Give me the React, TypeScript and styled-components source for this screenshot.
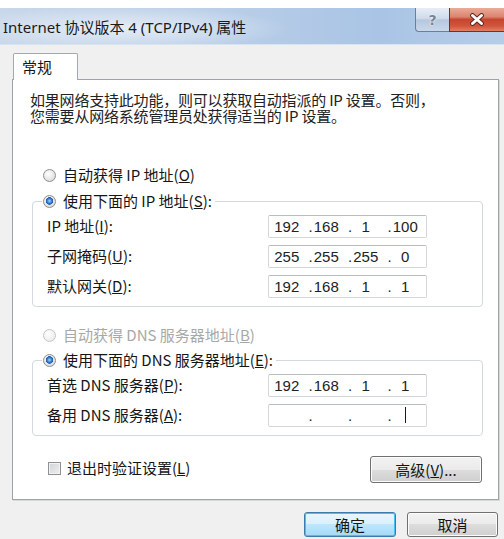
import React from 'react'
import styled, { createGlobalStyle } from 'styled-components'

const GlobalStyle = createGlobalStyle`
  html, body {
    margin: 0;
    padding: 0;
    background: #ffffff;
    overflow: hidden;
  }
  #root {
    width: 504px;
    height: 539px;
  }
`

const cjk = `"Noto Sans CJK SC", "Noto Sans", sans-serif`

const Window = styled.div`
  margin-top: 8px;
  width: 504px;
  height: 531px;
  display: flex;
  flex-direction: column;
  background: #f0f0f0;
  font-family: ${cjk};
  color: #151515;
`

const TitleBar = styled.div`
  height: 37px;
  flex: 0 0 auto;
  display: flex;
  align-items: flex-start;
  background:
    radial-gradient(ellipse 170px 22px at 120px 55%, rgba(236, 242, 249, 0.85), rgba(236, 242, 249, 0) 100%),
    linear-gradient(to right, #c8d7ea 0%, #bcd0e8 40%, #a9c4e5 75%, #b6cde8 100%);
  box-shadow: inset 0 -1px 0 #d9e4f1;
`

const Title = styled.div`
  flex: 1;
  align-self: center;
  padding-left: 3px;
  font-family: "Noto Sans", "Noto Sans CJK SC", sans-serif;
  font-size: 15px;
  line-height: 20px;
  color: #1a1a1a;
  white-space: nowrap;
`

const CaptionButtons = styled.div`
  display: flex;
`

const HelpButton = styled.div`
  width: 34px;
  height: 24px;
  box-sizing: border-box;
  border: 1px solid #6b7f99;
  border-top: none;
  border-right: none;
  border-radius: 0 0 0 4px;
  background: linear-gradient(#e6edf6 0%, #cfdbeb 45%, #b6c7de 52%, #c9d7ea 100%);
  display: flex;
  align-items: center;
  justify-content: center;
  font-family: "DejaVu Sans", sans-serif;
  font-weight: bold;
  font-size: 14px;
  color: #75839a;
  text-shadow: 0 0 2px #ffffff, 0 0 1px #ffffff;
`

const CloseButton = styled.div`
  width: 55px;
  height: 24px;
  box-sizing: border-box;
  border: 1px solid #7a2d22;
  border-top: none;
  border-right: none;
  background: linear-gradient(#e9ab99 0%, #dc8570 38%, #c84530 50%, #d0553c 78%, #e47e62 100%);
  display: flex;
  align-items: center;
  justify-content: center;
`

const Body = styled.div`
  flex: 1;
  display: flex;
  flex-direction: column;
  padding: 8px 5px 0 12px;
`

const TabStrip = styled.div`
  display: flex;
  padding-left: 1px;
`

const Tab = styled.div`
  position: relative;
  z-index: 1;
  width: 65px;
  height: 27px;
  box-sizing: border-box;
  margin-bottom: -1px;
  border: 1px solid #a3a9b1;
  border-bottom: none;
  border-radius: 2px 2px 0 0;
  background: #ffffff;
  padding: 3px 0 0 8px;
  font-size: 15px;
  line-height: 20px;
`

const Panel = styled.div`
  border: 1px solid #9da3ab;
  box-shadow: 1px 1px 0 #d8d8d8;
  background: #ffffff;
  padding: 12px 16px 16px 17px;
  display: flex;
  flex-direction: column;
  align-items: flex-start;
`

const Description = styled.p`
  margin: 0;
  font-size: 15px;
  line-height: 16px;
  color: #222222;
  letter-spacing: -0.2px;
`

const OptionRow = styled.div<{ $top: number; $disabled?: boolean }>`
  display: flex;
  align-items: center;
  gap: 7px;
  height: 20px;
  margin: ${p => p.$top}px 0 0 13px;
  font-size: 15px;
  line-height: 20px;
  color: ${p => (p.$disabled ? '#a8a8a8' : '#151515')};
`

const Radio = styled.span<{ $checked?: boolean; $disabled?: boolean }>`
  flex: 0 0 auto;
  width: 13px;
  height: 13px;
  box-sizing: border-box;
  border-radius: 50%;
  border: 1px solid ${p => (p.$disabled ? '#c6c6c6' : '#8c8e90')};
  background: ${p =>
    p.$checked
      ? 'radial-gradient(circle at 50% 45%, #a6d8fb 0, #3c8ad8 2px, #1d56a8 3.5px, rgba(29,86,168,0) 4px), radial-gradient(circle at 40% 35%, #ffffff, #dcdcdc 75%, #c8c8c8)'
      : p.$disabled
        ? 'radial-gradient(circle at 40% 35%, #ffffff, #ececec 75%, #e2e2e2)'
        : 'radial-gradient(circle at 40% 35%, #ffffff, #dedede 75%, #cacaca)'};
`

const Group = styled.fieldset<{ $top: number }>`
  box-sizing: border-box;
  width: 451px;
  min-width: 0;
  margin: ${p => p.$top}px 0 0 2px;
  padding: 3px 0 8px 9px;
  border: 1px solid #d2d9e0;
  border-radius: 4px;
`

const Legend = styled.legend`
  padding: 0 3px 0 1px;
  margin: 0;
`

const LegendOption = styled.div`
  display: flex;
  align-items: center;
  gap: 7px;
  height: 20px;
  font-size: 15px;
  line-height: 20px;
`

const FieldGrid = styled.div`
  display: grid;
  grid-template-columns: 221px 159px;
  grid-auto-rows: 24px;
  row-gap: 6px;
  align-items: center;
  margin-left: 5px;
`

const FieldLabel = styled.label`
  font-size: 15px;
  line-height: 20px;
  white-space: nowrap;
`

const IpBox = styled.div`
  height: 23px;
  box-sizing: border-box;
  border: 1px solid #d3d6da;
  border-top-color: #b8bcc2;
  border-radius: 2px;
  background: #ffffff;
  display: flex;
  align-items: center;
  padding-left: 5px;
  font-family: "Liberation Sans", Arial, sans-serif;
  font-size: 15px;
  color: #222222;
`

const Octet = styled.span`
  width: 26px;
  height: 18px;
  margin-right: 8px;
  display: flex;
  justify-content: center;
  align-items: center;
`

const Dot = styled.span`
  width: 6px;
  text-align: center;
`

const Caret = styled.span`
  display: inline-block;
  width: 1px;
  height: 16px;
  background: #1a1a1a;
`

const BottomRow = styled.div`
  align-self: stretch;
  display: flex;
  align-items: center;
  justify-content: space-between;
  margin-top: 20px;
`

const CheckOption = styled.div`
  display: flex;
  align-items: center;
  gap: 6px;
  margin: -3px 0 0 18px;
  font-size: 15px;
  line-height: 20px;
`

const Checkbox = styled.span`
  width: 13px;
  height: 13px;
  box-sizing: border-box;
  border: 1px solid #8f9193;
  background: linear-gradient(135deg, #d2d4d6, #eeeff0);
  box-shadow: inset 0 0 0 1px #f2f2f2;
`

const Button = styled.button<{ $w: number; $h: number; $default?: boolean }>`
  width: ${p => p.$w}px;
  height: ${p => p.$h}px;
  padding: 0;
  border-radius: 3px;
  border: 1px solid ${p => (p.$default ? '#3d7bad' : '#707070')};
  background: ${p =>
    p.$default
      ? 'linear-gradient(#eaf6fd 0%, #d9f0fc 50%, #bee6fd 50%, #a7d9f5 100%)'
      : 'linear-gradient(#f2f2f2 0%, #ebebeb 50%, #dddddd 50%, #cfcfcf 100%)'};
  box-shadow: inset 0 0 0 1px ${p => (p.$default ? '#48c0f2' : '#fcfcfc')};
  font-family: ${cjk};
  font-size: 15px;
  line-height: 20px;
  color: #151515;
`

const Footer = styled.div`
  display: flex;
  justify-content: flex-end;
  gap: 11px;
  margin-top: 12px;
  padding-right: 1px;
`

const IpField = ({ parts, caret }: { parts: string[]; caret?: boolean }) => (
  <IpBox>
    {parts.map((part, i) => (
      <React.Fragment key={i}>
        {i > 0 && <Dot>.</Dot>}
        <Octet>{part}{caret && i === 3 && <Caret />}</Octet>
      </React.Fragment>
    ))}
  </IpBox>
)

const CloseGlyph = () => (
  <svg width="16" height="13" viewBox="0 0 16 13">
    <path d="M3.5 2.5 L12.5 10.5 M12.5 2.5 L3.5 10.5" stroke="#5b2219" strokeWidth="4.8" strokeLinecap="round" />
    <path d="M3.5 2.5 L12.5 10.5 M12.5 2.5 L3.5 10.5" stroke="#ffffff" strokeWidth="3" strokeLinecap="round" />
  </svg>
)

const App = () => {
  return (
    <>
      <GlobalStyle />
      <Window>
        <TitleBar>
          <Title>Internet 协议版本 4 (TCP/IPv4) 属性</Title>
          <CaptionButtons>
            <HelpButton>?</HelpButton>
            <CloseButton>
              <CloseGlyph />
            </CloseButton>
          </CaptionButtons>
        </TitleBar>

        <Body>
          <TabStrip>
            <Tab>常规</Tab>
          </TabStrip>
          <Panel>
            <Description>
              如果网络支持此功能，则可以获取自动指派的 IP 设置。否则，
              <br />
              您需要从网络系统管理员处获得适当的 IP 设置。
            </Description>

            <OptionRow $top={41}>
              <Radio />
              <span>自动获得 IP 地址(<u>O</u>)</span>
            </OptionRow>
            <Group $top={6}>
              <Legend>
                <LegendOption>
                  <Radio $checked />
                  <span>使用下面的 IP 地址(<u>S</u>):</span>
                </LegendOption>
              </Legend>
              <FieldGrid>
                <FieldLabel>IP 地址(<u>I</u>):</FieldLabel>
                <IpField parts={['192', '168', '1', '100']} />
                <FieldLabel>子网掩码(<u>U</u>):</FieldLabel>
                <IpField parts={['255', '255', '255', '0']} />
                <FieldLabel>默认网关(<u>D</u>):</FieldLabel>
                <IpField parts={['192', '168', '1', '1']} />
              </FieldGrid>
            </Group>

            <OptionRow $top={18} $disabled>
              <Radio $disabled />
              <span>自动获得 DNS 服务器地址(<u>B</u>)</span>
            </OptionRow>
            <Group $top={5}>
              <Legend>
                <LegendOption>
                  <Radio $checked />
                  <span>使用下面的 DNS 服务器地址(<u>E</u>):</span>
                </LegendOption>
              </Legend>
              <FieldGrid>
                <FieldLabel>首选 DNS 服务器(<u>P</u>):</FieldLabel>
                <IpField parts={['192', '168', '1', '1']} />
                <FieldLabel>备用 DNS 服务器(<u>A</u>):</FieldLabel>
                <IpField parts={['', '', '', '']} caret />
              </FieldGrid>
            </Group>

            <BottomRow>
              <CheckOption>
                <Checkbox />
                <span>退出时验证设置(<u>L</u>)</span>
              </CheckOption>
              <Button $w={112} $h={27}>高级(<u>V</u>)...</Button>
            </BottomRow>
          </Panel>

          <Footer>
            <Button $w={92} $h={25} $default>确定</Button>
            <Button $w={91} $h={25}>取消</Button>
          </Footer>
        </Body>
      </Window>
    </>
  )
}

export default App
